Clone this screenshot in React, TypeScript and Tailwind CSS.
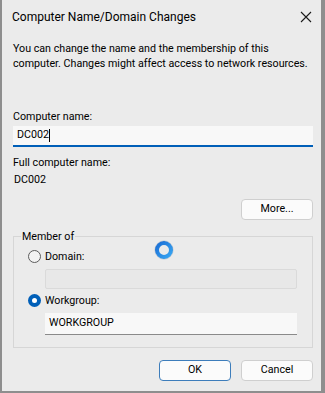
import React from "react";

const font = { fontFamily: 'Roboto, "Liberation Sans", sans-serif' };

const Radio = ({ checked }: { checked?: boolean }) =>
  checked ? (
    <span className="w-[13px] h-[13px] rounded-full bg-[#005fb8] flex items-center justify-center shrink-0">
      <span className="w-[5px] h-[5px] rounded-full bg-white" />
    </span>
  ) : (
    <span className="w-[13px] h-[13px] rounded-full border border-[#5c5c5c] bg-[#f3f3f3] shrink-0" />
  );

const Button = ({ children, primary }: { children: React.ReactNode; primary?: boolean }) => (
  <button
    className={
      primary
        ? "w-[72px] h-[21px] rounded-[4px] bg-[#fbfbfb] border border-[#3d7dbb] text-[10.7px] text-black leading-none"
        : "w-[72px] h-[21px] rounded-[4px] bg-[#fbfbfb] border border-[#cfcfcf] text-[10.7px] text-black leading-none"
    }
  >
    {children}
  </button>
);

export default function App() {
  return (
    <div
      className="w-[325px] h-[393px] bg-[#ebebeb] border-l-2 border-r-4 border-b-2 border-[#8e8e8e] text-[10.7px] text-black flex flex-col relative whitespace-nowrap"
      style={font}
    >
      {/* Title bar */}
      <div className="h-[34px] flex items-center justify-between pl-[10px] pr-[8px] shrink-0">
        <span className="text-[12px]">Computer Name/Domain Changes</span>
        <svg width="12" height="12" viewBox="0 0 12 12" className="mr-[1px]">
          <path d="M1 1 L11 11 M11 1 L1 11" stroke="#1a1a1a" strokeWidth="1.1" />
        </svg>
      </div>

      <div className="pl-[11px] pr-[10px] flex flex-col">
        <p className="mt-[7px] leading-[15px]">
          You can change the name and the membership of this
          <br />
          computer. Changes might affect access to network resources.
        </p>

        <label className="mt-[38px] leading-[15px]">Computer name:</label>
        <div className="mt-[2px] w-[300px] h-[21px] bg-[#f8f8f8] border-b-2 border-[#005fb8] flex items-center pl-[4px]">
          <span>DC002</span>
          <span className="w-px h-[13px] bg-black" />
        </div>

        <label className="mt-[8px] leading-[15px]">Full computer name:</label>
        <span className="mt-[2px] pl-[1px] leading-[15px]">DC002</span>

        <div className="mt-[12px] w-[300px] flex justify-end">
          <Button>More...</Button>
        </div>

        {/* Member of group */}
        <div className="mt-[16px] w-[300px] h-[112px] border border-[#d6d6d6] pl-[14px] pr-[14px] flex flex-col relative">
          <span className="absolute left-[7px] top-[-8px] px-[1px] bg-[#ebebeb] leading-[15px]">Member of</span>
          <div className="mt-[12px] flex items-center gap-[4px] leading-[15px]">
            <Radio />
            <span>Domain:</span>
          </div>
          <div className="mt-[5px] ml-[17px] w-[252px] h-[20px] bg-[#e8e8e8] border border-[#dadada] rounded-[2px]" />
          <div className="mt-[4px] flex items-center gap-[4px] leading-[15px]">
            <Radio checked />
            <span>Workgroup:</span>
          </div>
          <div className="mt-[5px] ml-[17px] w-[252px] h-[22px] bg-[#f8f8f8] border-b border-[#8a8a8a] flex items-center pl-[4px]">
            WORKGROUP
          </div>
        </div>

        <div className="mt-[12px] w-[300px] flex justify-end gap-[10px]">
          <Button primary>OK</Button>
          <Button>Cancel</Button>
        </div>
      </div>

      {/* busy cursor */}
      <svg width="22" height="22" viewBox="0 0 22 22" className="absolute left-[151px] top-[239px]">
        <defs>
          <linearGradient id="g" x1="0" y1="0" x2="1" y2="1">
            <stop offset="0" stopColor="#1b6fd6" />
            <stop offset="1" stopColor="#38a6f2" />
          </linearGradient>
        </defs>
        <circle cx="11" cy="11" r="7" fill="none" stroke="url(#g)" strokeWidth="4" />
        <circle cx="11" cy="11" r="9.2" fill="none" stroke="#0b3f7a" strokeOpacity="0.25" strokeWidth="0.6" />
      </svg>
    </div>
  );
}
